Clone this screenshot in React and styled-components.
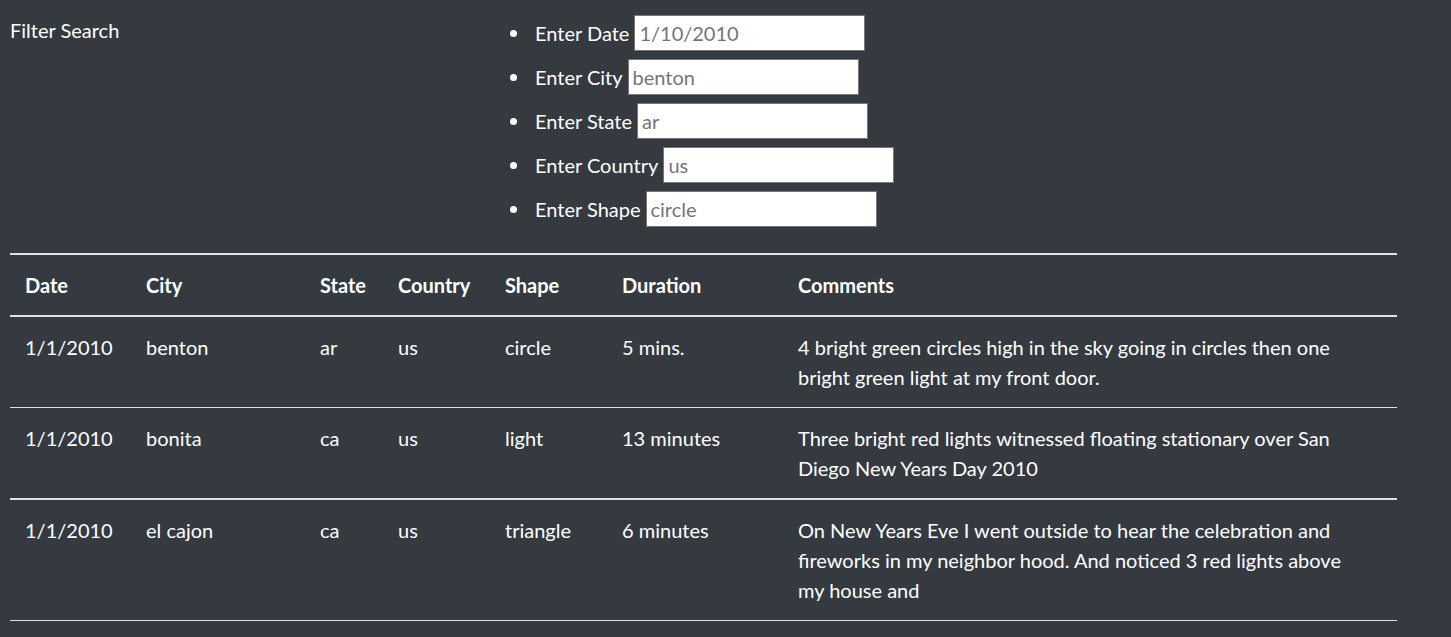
import styled, { createGlobalStyle } from "styled-components";

const GlobalStyle = createGlobalStyle`
  html, body {
    margin: 0;
    padding: 0;
    background: #343a40;
  }
  body {
    font-family: "Lato", "Open Sans", sans-serif;
    font-size: 20px;
    color: #ffffff;
  }
`;

const filters = [
  { label: "Enter Date", placeholder: "1/10/2010" },
  { label: "Enter City", placeholder: "benton" },
  { label: "Enter State", placeholder: "ar" },
  { label: "Enter Country", placeholder: "us" },
  { label: "Enter Shape", placeholder: "circle" },
];

const columns = [
  { name: "Date", width: 121 },
  { name: "City", width: 174 },
  { name: "State", width: 78 },
  { name: "Country", width: 107 },
  { name: "Shape", width: 117 },
  { name: "Duration", width: 176 },
  { name: "Comments", width: 614 },
];

const sightings = [
  {
    date: "1/1/2010",
    city: "benton",
    state: "ar",
    country: "us",
    shape: "circle",
    duration: "5 mins.",
    comments:
      "4 bright green circles high in the sky going in circles then one bright green light at my front door.",
  },
  {
    date: "1/1/2010",
    city: "bonita",
    state: "ca",
    country: "us",
    shape: "light",
    duration: "13 minutes",
    comments:
      "Three bright red lights witnessed floating stationary over San Diego New Years Day 2010",
    thick: true,
  },
  {
    date: "1/1/2010",
    city: "el cajon",
    state: "ca",
    country: "us",
    shape: "triangle",
    duration: "6 minutes",
    comments:
      "On New Years Eve I went outside to hear the celebration and fireworks in my neighbor hood. And noticed 3 red lights above my house and",
  },
];

function App() {
  return (
    <>
      <GlobalStyle />
      <Page>
        <FilterArea>
          <FilterTitle>Filter Search</FilterTitle>
          <FilterList>
            {filters.map((f) => (
              <FilterItem key={f.label}>
                <FilterLabel>{f.label}</FilterLabel>
                <FilterInput type="text" placeholder={f.placeholder} />
              </FilterItem>
            ))}
          </FilterList>
        </FilterArea>

        <Table>
          <colgroup>
            {columns.map((c) => (
              <col key={c.name} style={{ width: c.width }} />
            ))}
          </colgroup>
          <thead>
            <tr>
              {columns.map((c) => (
                <HeadCell key={c.name}>{c.name}</HeadCell>
              ))}
            </tr>
          </thead>
          <tbody>
            {sightings.map((s, i) => (
              <Row key={i} $thick={s.thick}>
                <Cell>{s.date}</Cell>
                <Cell>{s.city}</Cell>
                <Cell>{s.state}</Cell>
                <Cell>{s.country}</Cell>
                <Cell>{s.shape}</Cell>
                <Cell>{s.duration}</Cell>
                <CommentCell>{s.comments}</CommentCell>
              </Row>
            ))}
          </tbody>
        </Table>
      </Page>
    </>
  );
}

const Page = styled.div`
  padding: 0 10px;
`;

const FilterArea = styled.div`
  display: grid;
  grid-template-columns: 485px 1fr;
  align-items: start;
`;

const FilterTitle = styled.div`
  padding-top: 15px;
  line-height: 30px;
`;

const FilterList = styled.ul`
  list-style: none;
  margin: 11px 0 22px;
  padding: 0 0 0 15px;
`;

const FilterItem = styled.li`
  display: flex;
  align-items: center;
  height: 44px;
  &::before {
    content: "";
    width: 7px;
    height: 7px;
    border-radius: 50%;
    background: #ffffff;
    margin-right: 18px;
    flex-shrink: 0;
  }
`;

const FilterLabel = styled.span`
  line-height: 30px;
  margin-right: 5px;
`;

const FilterInput = styled.input`
  box-sizing: border-box;
  width: 231px;
  height: 36px;
  padding: 0 4px;
  border: 1px solid #767676;
  background: #ffffff;
  font-family: "Lato", "Open Sans", sans-serif;
  font-size: 20px;
  color: #212529;
  outline: none;
  &::placeholder {
    color: #757575;
  }
`;

const Table = styled.table`
  width: 1387px;
  table-layout: fixed;
  border-collapse: collapse;
  color: #ffffff;
  line-height: 30px;
`;

const HeadCell = styled.th`
  text-align: left;
  font-weight: 700;
  padding: 15px;
  border-top: 2px solid #dee2e6;
  border-bottom: 2px solid #dee2e6;
  vertical-align: bottom;
`;

const Row = styled.tr`
  border-bottom: ${(p) => (p.$thick ? "2px" : "1px")} solid #dee2e6;
`;

const Cell = styled.td`
  padding: 15px;
  vertical-align: top;
  white-space: nowrap;
`;

const CommentCell = styled.td`
  padding: 15px 28px 15px 15px;
  vertical-align: top;
`;

export default App;
